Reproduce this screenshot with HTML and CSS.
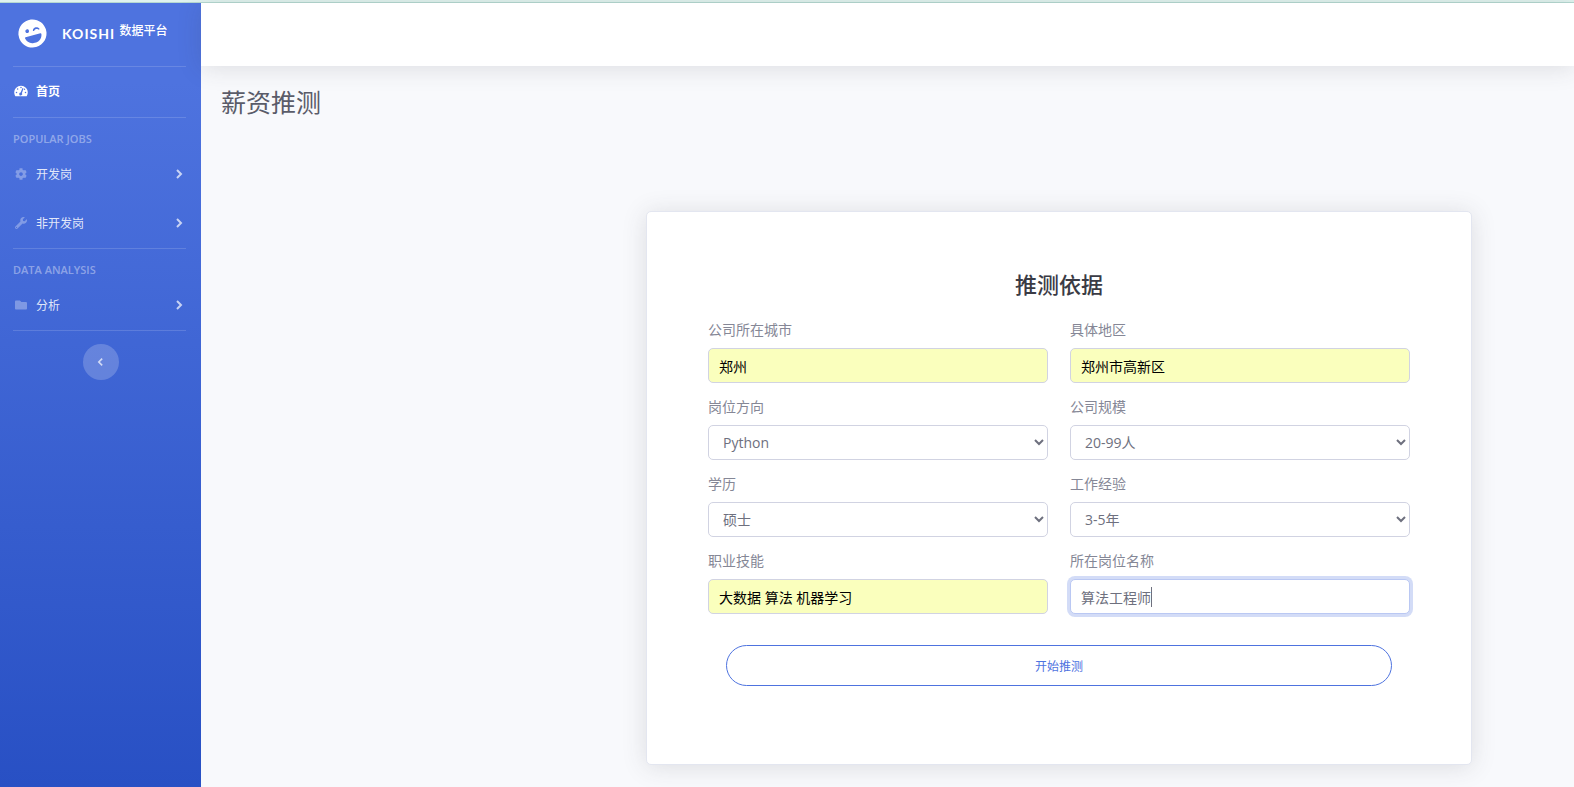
FILE: index.html
```html
<!DOCTYPE html>
<html lang="zh-CN">
<head>
<meta charset="utf-8">
<meta name="viewport" content="width=device-width, initial-scale=1">
<title>薪资推测</title>
<link rel="stylesheet" href="styles.css">
</head>
<body>
<div class="strip"></div>
<div class="wrapper">
  <nav class="sidebar">
    <a class="brand" href="#">
      <svg class="brand-icon" viewBox="0 0 496 512" aria-hidden="true"><path d="M248 8C111 8 0 119 0 256s111 248 248 248 248-111 248-248S385 8 248 8zm20 198c4-25 34-42 60-42s56 17 60 42c2 11-11 18-20 11l-9-9c-15-13-47-13-61 0l-10 9c-8 7-22 0-20-11zM168 160c18 0 32 14 32 32s-14 32-32 32-32-14-32-32 14-32 32-32zM383 288c9 0 16 7 15 16-8 63-63 120-129 120h-42c-66 0-121-57-129-120-1-9 6-16 15-16z"/></svg>
      <span class="brand-name">KOISHI <sup>数据平台</sup></span>
    </a>
    <hr class="divider">
    <a class="nav-link home" href="#">
      <svg class="nav-icon" viewBox="0 0 576 512" aria-hidden="true"><path d="M288 32C129 32 0 161 0 320c0 53 14 102 39 145 6 10 16 15 27 15h443c11 0 22-5 28-15 25-43 39-92 39-145 0-159-129-288-288-288z"/><g class="gauge"><circle cx="288" cy="106" r="32"/><circle cx="144" cy="170" r="32"/><circle cx="96" cy="320" r="32"/><circle cx="480" cy="320" r="32"/><circle cx="440" cy="180" r="28"/><path d="M352 130l44 16-68 200a64 64 0 1 1-56-26z"/></g></svg>
      <span>首页</span>
    </a>
    <hr class="divider">
    <div class="heading">POPULAR JOBS</div>
    <a class="nav-link" href="#">
      <svg class="nav-icon" viewBox="0 0 512 512" aria-hidden="true"><path d="M487.400 315.700l-42.600-24.600c4.300-23.200 4.300-47 0-70.200l42.600-24.600c4.900-2.800 7.100-8.600 5.500-14-11.100-35.600-30-67.800-54.700-94.600-3.800-4.100-10-5.100-14.800-2.300L380.800 110c-17.900-15.400-38.500-27.300-60.800-35.100V25.800c0-5.600-3.900-10.500-9.400-11.700-36.700-8.200-74.300-7.800-109.200 0-5.500 1.200-9.400 6.100-9.400 11.700V75c-22.200 7.900-42.800 19.800-60.800 35.100L88.700 85.500c-4.900-2.800-11-1.900-14.800 2.300-24.700 26.700-43.600 58.900-54.700 94.600-1.700 5.400.6 11.200 5.500 14L67.300 221c-4.300 23.200-4.300 47 0 70.200l-42.600 24.600c-4.900 2.800-7.100 8.600-5.500 14 11.100 35.600 30 67.800 54.700 94.600 3.800 4.100 10 5.100 14.800 2.300l42.600-24.600c17.900 15.400 38.500 27.300 60.800 35.100v49.200c0 5.600 3.900 10.500 9.400 11.700 36.700 8.200 74.300 7.800 109.200 0 5.500-1.200 9.400-6.100 9.400-11.700v-49.200c22.200-7.900 42.800-19.800 60.800-35.100l42.600 24.600c4.900 2.800 11 1.900 14.800-2.300 24.700-26.700 43.600-58.900 54.700-94.600 1.500-5.500-.7-11.300-5.600-14.100zM256 336c-44.100 0-80-35.900-80-80s35.900-80 80-80 80 35.900 80 80-35.900 80-80 80z"/></svg>
      <span>开发岗</span>
      <svg class="angle" viewBox="0 0 8 12" aria-hidden="true"><path d="M2 2l4 4-4 4"/></svg>
    </a>
    <a class="nav-link" href="#">
      <svg class="nav-icon" viewBox="0 0 512 512" aria-hidden="true"><path d="M507.700 109.100c-2.200-9-13.500-12.100-20.100-5.500l-74.400 74.400-67.900-11.300-11.300-67.900 74.400-74.400c6.600-6.600 3.400-17.900-5.700-20.200-47.400-11.700-99.600.9-136.600 37.900-39.600 39.600-50.500 97.100-34 147.200L18.700 402.800c-25 25-25 65.500 0 90.500s65.500 25 90.500 0l213.200-213.200c50.100 16.700 107.500 5.700 147.400-34.200 37.100-37.100 49.700-89.300 37.900-136.800zM64 472c-13.200 0-24-10.800-24-24s10.800-24 24-24 24 10.700 24 24-10.800 24-24 24z"/></svg>
      <span>非开发岗</span>
      <svg class="angle" viewBox="0 0 8 12" aria-hidden="true"><path d="M2 2l4 4-4 4"/></svg>
    </a>
    <hr class="divider">
    <div class="heading">DATA ANALYSIS</div>
    <a class="nav-link" href="#">
      <svg class="nav-icon" viewBox="0 0 512 512" aria-hidden="true"><path d="M464 128H272l-64-64H48C21.500 64 0 85.500 0 112v288c0 26.500 21.500 48 48 48h416c26.500 0 48-21.500 48-48V176c0-26.500-21.500-48-48-48z"/></svg>
      <span>分析</span>
      <svg class="angle" viewBox="0 0 8 12" aria-hidden="true"><path d="M2 2l4 4-4 4"/></svg>
    </a>
    <hr class="divider">
    <button class="toggle" type="button" aria-label="收起侧栏">
      <svg class="angle" viewBox="0 0 8 12" aria-hidden="true"><path d="M6 2L2 6l4 4"/></svg>
    </button>
  </nav>
  <div class="content">
    <header class="topbar"></header>
    <main class="page">
      <h1 class="page-title">薪资推测</h1>
      <div class="layout">
        <section class="card">
          <h2 class="card-title">推测依据</h2>
          <form>
            <div class="fields">
              <div class="field">
                <label for="city">公司所在城市</label>
                <input class="control filled" id="city" type="text" value="郑州">
              </div>
              <div class="field">
                <label for="area">具体地区</label>
                <input class="control filled" id="area" type="text" value="郑州市高新区">
              </div>
              <div class="field">
                <label for="direction">岗位方向</label>
                <select class="control" id="direction"><option>Python</option></select>
              </div>
              <div class="field">
                <label for="scale">公司规模</label>
                <select class="control" id="scale"><option>20-99人</option></select>
              </div>
              <div class="field">
                <label for="degree">学历</label>
                <select class="control" id="degree"><option>硕士</option></select>
              </div>
              <div class="field">
                <label for="experience">工作经验</label>
                <select class="control" id="experience"><option>3-5年</option></select>
              </div>
              <div class="field">
                <label for="skills">职业技能</label>
                <input class="control filled" id="skills" type="text" value="大数据 算法 机器学习">
              </div>
              <div class="field">
                <label for="job">所在岗位名称</label>
                <div class="caret-box">
                  <input class="control active" id="job" type="text" value="算法工程师">
                  <span class="caret"></span>
                </div>
              </div>
            </div>
            <button class="submit" type="button">开始推测</button>
          </form>
        </section>
      </div>
    </main>
  </div>
</div>
</body>
</html>
```

FILE: styles.css
```css
* {
  box-sizing: border-box;
}

body {
  margin: 0;
  min-height: 100vh;
  display: flex;
  flex-direction: column;
  background: #f8f9fc;
  color: #858796;
  font-family: "Open Sans", "Noto Sans CJK SC", sans-serif;
  font-size: 14px;
}

.strip {
  height: 3px;
  background: #e0f3ef;
  border-bottom: 1px solid #b5d9d1;
}

.wrapper {
  flex: 1;
  display: flex;
}

/* Sidebar */
.sidebar {
  flex: none;
  width: 201px;
  background: linear-gradient(180deg, #4e73df 10%, #2850c4 100%);
}

.brand {
  display: flex;
  align-items: center;
  gap: 15px;
  height: 63px;
  padding: 0 18px 2px;
  color: #fff;
  text-decoration: none;
}

.brand-icon {
  width: 29px;
  height: 29px;
  fill: #fff;
  fill-rule: evenodd;
  transform: rotate(-15deg);
}

.brand-name {
  font-family: Lato, "Noto Sans CJK SC", sans-serif;
  font-size: 14px;
  font-weight: 700;
  letter-spacing: 1px;
  white-space: nowrap;
}

.brand-name sup {
  font-size: 12px;
  font-weight: 500;
  letter-spacing: 0;
  line-height: 0;
  vertical-align: 4px;
}

.divider {
  height: 1px;
  margin: 0 15px 0 13px;
  border: 0;
  background: rgba(255, 255, 255, 0.15);
}

.nav-link {
  display: flex;
  align-items: center;
  gap: 8px;
  height: 49px;
  padding: 0 18px 2px 14px;
  color: rgba(255, 255, 255, 0.85);
  font-size: 12px;
  text-decoration: none;
}

.nav-icon {
  width: 14px;
  height: 12px;
  fill: rgba(255, 255, 255, 0.32);
}

.home {
  height: 50px;
  color: #fff;
  font-weight: 700;
}

.home .nav-icon {
  fill: #fff;
}

.nav-icon .gauge {
  fill: #4e73df;
}

.angle {
  width: 8px;
  height: 12px;
  margin-left: auto;
  fill: none;
  stroke: rgba(255, 255, 255, 0.7);
  stroke-width: 2;
}

.heading {
  height: 20px;
  margin-top: 12px;
  padding: 0 13px;
  color: rgba(255, 255, 255, 0.4);
  font-size: 11px;
  font-weight: 600;
  line-height: 18px;
}

.toggle {
  display: flex;
  align-items: center;
  justify-content: center;
  width: 36px;
  height: 36px;
  margin: 13px auto 0;
  padding: 0;
  border: 0;
  border-radius: 50%;
  background: rgba(255, 255, 255, 0.2);
}

.toggle .angle {
  width: 7px;
  height: 10px;
  margin: 0;
}

/* Main column */
.content {
  flex: 1;
  min-width: 0;
}

.topbar {
  height: 63px;
  background: #fff;
  box-shadow: 0 2px 25px rgba(58, 59, 69, 0.15);
}

.page {
  padding: 21px 22px 21px 20px;
}

.page-title {
  margin: 0;
  color: #5a5c69;
  font-size: 25px;
  font-weight: 400;
  line-height: 30px;
}

.layout {
  display: grid;
  grid-template-columns: 425fr 826fr 80fr;
  margin-top: 94px;
}

.card {
  grid-column: 2;
  padding: 59px 61px 78px;
  border: 1px solid #e3e6f0;
  border-radius: 5px;
  background: #fff;
  box-shadow: 0 2px 25px rgba(58, 59, 69, 0.15);
}

.card-title {
  margin: 0 0 22px;
  color: #3a3b45;
  font-size: 22px;
  font-weight: 500;
  line-height: 26px;
  text-align: center;
}

.fields {
  display: grid;
  grid-template-columns: 1fr 1fr;
  gap: 13px 22px;
}

.field {
  display: flex;
  flex-direction: column;
  gap: 7px;
}

.field label {
  line-height: 22px;
}

.control {
  display: block;
  width: 100%;
  height: 35px;
  padding: 0 10px;
  border: 1px solid #d1d3e2;
  border-radius: 5px;
  background-color: #fff;
  color: #6e707e;
  font: inherit;
}

.filled {
  background-color: #faffbd;
  color: #000;
}

.active {
  border-color: #bac8f3;
  box-shadow: 0 0 0 3px rgba(78, 115, 223, 0.25);
  outline: none;
}

.caret-box {
  position: relative;
}

.caret {
  position: absolute;
  top: 8px;
  left: calc(5em + 11px);
  width: 1px;
  height: 20px;
  background: #6e707e;
}

.submit {
  display: block;
  width: calc(100% - 36px);
  height: 41px;
  margin: 31px auto 0;
  border: 1px solid #4e73df;
  border-radius: 21px;
  background: transparent;
  color: #4e73df;
  font: inherit;
  font-size: 12px;
}
```
